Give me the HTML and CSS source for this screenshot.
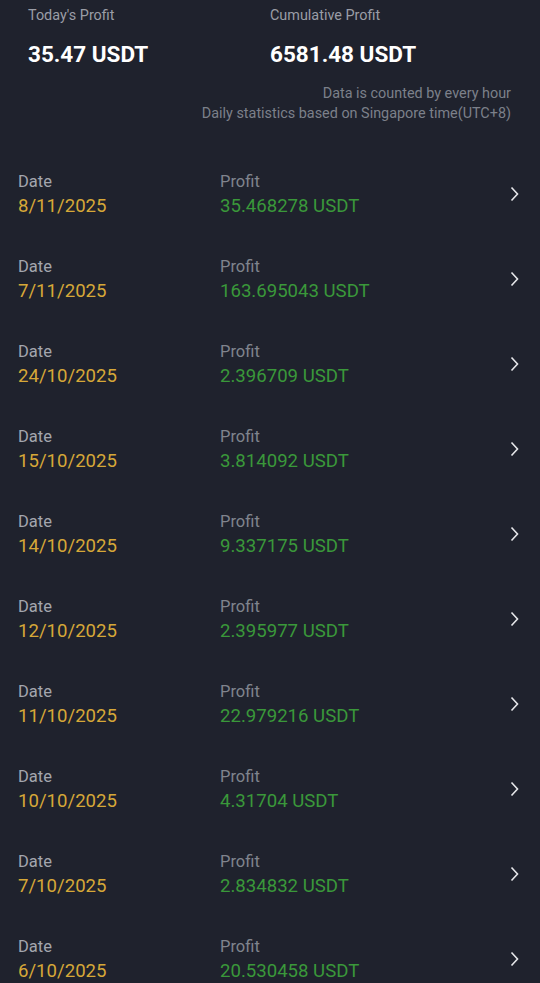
FILE: index.html
```html
<!DOCTYPE html>
<html lang="en">
<head>
    <meta charset="UTF-8">
    <meta name="viewport" content="width=device-width, initial-scale=1.0">
    <title>Profit</title>
    <link rel="stylesheet" href="styles.css">
</head>
<body>

    <div class="summary">
        <div class="stats">
            <div>
                <div class="stat-label">Today's Profit</div>
                <div class="stat-value">35.47 USDT</div>
            </div>
            <div>
                <div class="stat-label">Cumulative Profit</div>
                <div class="stat-value">6581.48 USDT</div>
            </div>
        </div>
        <div class="note">Data is counted by every hour</div>
        <div class="note">Daily statistics based on Singapore time(UTC+8)</div>
    </div>

    <div class="list">
        <div class="row">
            <div><div class="label">Date</div><div class="date">8/11/2025</div></div>
            <div><div class="label dim">Profit</div><div class="profit">35.468278 USDT</div></div>
            <svg class="chevron" viewBox="0 0 9 16"><path d="M1.5 1.5 L7.5 8 L1.5 14.5"/></svg>
        </div>
        <div class="row">
            <div><div class="label">Date</div><div class="date">7/11/2025</div></div>
            <div><div class="label dim">Profit</div><div class="profit">163.695043 USDT</div></div>
            <svg class="chevron" viewBox="0 0 9 16"><path d="M1.5 1.5 L7.5 8 L1.5 14.5"/></svg>
        </div>
        <div class="row">
            <div><div class="label">Date</div><div class="date">24/10/2025</div></div>
            <div><div class="label dim">Profit</div><div class="profit">2.396709 USDT</div></div>
            <svg class="chevron" viewBox="0 0 9 16"><path d="M1.5 1.5 L7.5 8 L1.5 14.5"/></svg>
        </div>
        <div class="row">
            <div><div class="label">Date</div><div class="date">15/10/2025</div></div>
            <div><div class="label dim">Profit</div><div class="profit">3.814092 USDT</div></div>
            <svg class="chevron" viewBox="0 0 9 16"><path d="M1.5 1.5 L7.5 8 L1.5 14.5"/></svg>
        </div>
        <div class="row">
            <div><div class="label">Date</div><div class="date">14/10/2025</div></div>
            <div><div class="label dim">Profit</div><div class="profit">9.337175 USDT</div></div>
            <svg class="chevron" viewBox="0 0 9 16"><path d="M1.5 1.5 L7.5 8 L1.5 14.5"/></svg>
        </div>
        <div class="row">
            <div><div class="label">Date</div><div class="date">12/10/2025</div></div>
            <div><div class="label dim">Profit</div><div class="profit">2.395977 USDT</div></div>
            <svg class="chevron" viewBox="0 0 9 16"><path d="M1.5 1.5 L7.5 8 L1.5 14.5"/></svg>
        </div>
        <div class="row">
            <div><div class="label">Date</div><div class="date">11/10/2025</div></div>
            <div><div class="label dim">Profit</div><div class="profit">22.979216 USDT</div></div>
            <svg class="chevron" viewBox="0 0 9 16"><path d="M1.5 1.5 L7.5 8 L1.5 14.5"/></svg>
        </div>
        <div class="row">
            <div><div class="label">Date</div><div class="date">10/10/2025</div></div>
            <div><div class="label dim">Profit</div><div class="profit">4.31704 USDT</div></div>
            <svg class="chevron" viewBox="0 0 9 16"><path d="M1.5 1.5 L7.5 8 L1.5 14.5"/></svg>
        </div>
        <div class="row">
            <div><div class="label">Date</div><div class="date">7/10/2025</div></div>
            <div><div class="label dim">Profit</div><div class="profit">2.834832 USDT</div></div>
            <svg class="chevron" viewBox="0 0 9 16"><path d="M1.5 1.5 L7.5 8 L1.5 14.5"/></svg>
        </div>
        <div class="row">
            <div><div class="label">Date</div><div class="date">6/10/2025</div></div>
            <div><div class="label dim">Profit</div><div class="profit">20.530458 USDT</div></div>
            <svg class="chevron" viewBox="0 0 9 16"><path d="M1.5 1.5 L7.5 8 L1.5 14.5"/></svg>
        </div>
    </div>

</body>
</html>
```

FILE: styles.css
```css
body {
    margin: 0;
    font-family: Roboto, "Liberation Sans", sans-serif;
    background-color: #1f222d;
    color: #fff;
    overflow: hidden;
}
.summary {
    padding: 6px 29px 0 28px;
}
.stats {
    display: grid;
    grid-template-columns: 242px 1fr;
}
.stat-label {
    font-size: 14.4px;
    line-height: 20px;
    color: #9a9da6;
}
.stat-value {
    margin-top: 13px;
    font-size: 22.5px;
    line-height: 30px;
    font-weight: bold;
    color: #fff;
}
.stats + .note {
    margin-top: 15px;
}
.note {
    text-align: right;
    font-size: 14.4px;
    line-height: 20px;
    color: #7c808a;
}
.list {
    margin-top: 27px;
}
.row {
    display: grid;
    grid-template-columns: 202px 1fr auto;
    align-items: center;
    height: 85px;
    box-sizing: border-box;
    padding: 0 21px 0 18px;
}
.label {
    font-size: 16.5px;
    line-height: 24px;
    color: #a3a6ae;
}
.label.dim {
    color: #80848d;
}
.date {
    font-size: 18.6px;
    line-height: 24px;
    color: #d6a838;
}
.profit {
    font-size: 18.6px;
    line-height: 24px;
    color: #3a983a;
}
.chevron {
    width: 9px;
    height: 16px;
    fill: none;
    stroke: #e6e7ea;
    stroke-width: 1.6;
}
```
